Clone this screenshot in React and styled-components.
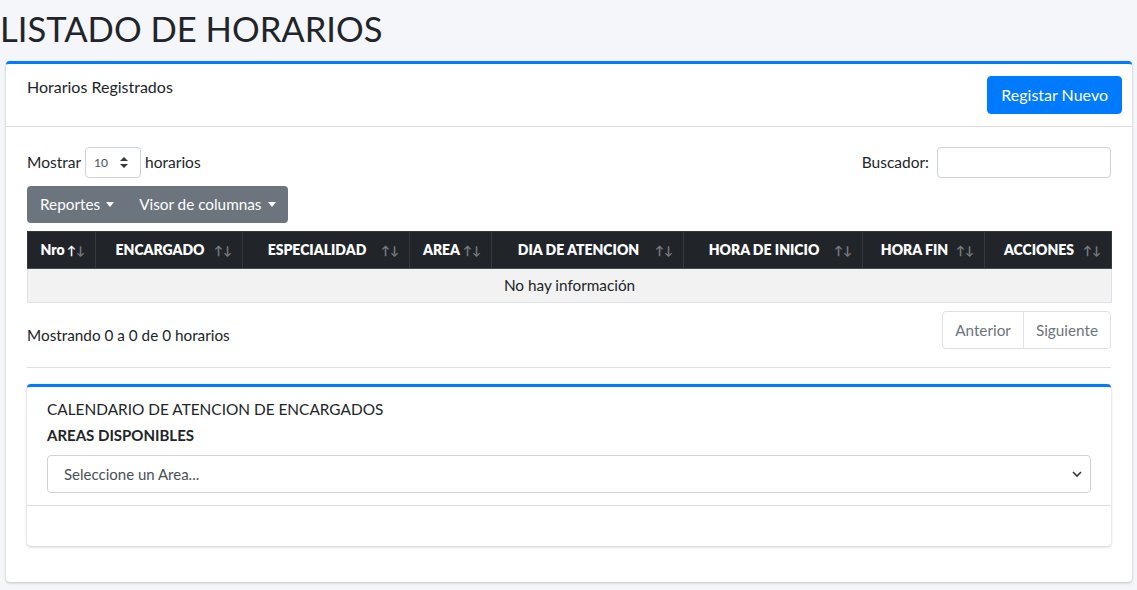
import React from 'react';
import styled, { createGlobalStyle } from 'styled-components';

const GlobalStyle = createGlobalStyle`
  body {
    margin: 0;
    background: #f4f6f9;
    font-family: Lato, "Noto Sans", sans-serif;
    font-size: 16px;
    color: #212529;
  }
`;

const Page = styled.div`
  display: flex;
  flex-direction: column;
`;

const Title = styled.h1`
  margin: 0;
  padding: 7px 0 10px;
  font-size: 34.6px;
  font-weight: 400;
  line-height: 44px;
  color: #212529;
`;

const Wrap = styled.div`
  padding: 0 5px 0 6px;
`;

const Card = styled.div`
  background: #fff;
  border-top: 3px solid #007bff;
  border-radius: 4px;
  box-shadow: 0 0 1px rgba(0, 0, 0, 0.125), 0 1px 3px rgba(0, 0, 0, 0.2);
  margin-bottom: ${(p) => p.mb || 8}px;
`;

const CardHeader = styled.div`
  display: flex;
  justify-content: space-between;
  align-items: flex-start;
  padding: 12px 10px 12px 21px;
  border-bottom: 1px solid rgba(0, 0, 0, 0.125);
`;

const CardTitle = styled.div`
  font-size: 16px;
  line-height: 22px;
`;

const Button = styled.button`
  font-family: inherit;
  font-size: 16px;
  line-height: 24px;
  padding: 6px 13px;
  color: #fff;
  background: ${(p) => p.bg || '#007bff'};
  border: 1px solid ${(p) => p.bg || '#007bff'};
  border-radius: 4px;
`;

const CardBody = styled.div`
  padding: 20px 21px 20px 21px;
`;

const Controls = styled.div`
  display: flex;
  flex-direction: column;
`;

const TopRow = styled.div`
  display: flex;
  justify-content: space-between;
  align-items: center;
  height: 30px;
`;

const Label = styled.label`
  display: flex;
  align-items: center;
  gap: 4px;
  font-size: 15.5px;
`;

const SmallSelect = styled.div`
  display: flex;
  align-items: center;
  justify-content: space-between;
  box-sizing: border-box;
  width: 56px;
  height: 31px;
  padding: 0 12px 0 8px;
  border: 1px solid #ced4da;
  border-radius: 4px;
  font-size: 12px;
  color: #495057;
`;

const SearchInput = styled.input`
  box-sizing: border-box;
  width: 174px;
  height: 31px;
  margin-left: 4px;
  border: 1px solid #ced4da;
  border-radius: 4px;
`;

const ButtonGroup = styled.div`
  display: inline-flex;
  margin: 9px 0 8px;
  background: #6c757d;
  border-radius: 4px;
  align-self: flex-start;
`;

const GroupButton = styled.button`
  display: flex;
  align-items: center;
  gap: 6px;
  font-family: inherit;
  font-size: 15.3px;
  line-height: 25px;
  padding: 6px 12px 6px 13px;
  color: #fff;
  background: transparent;
  border: none;
`;

const Caret = styled.span`
  width: 0;
  height: 0;
  border-top: 5px solid #fff;
  border-left: 4px solid transparent;
  border-right: 4px solid transparent;
`;

const Table = styled.table`
  width: 100%;
  border-collapse: collapse;
  table-layout: fixed;
`;

const Th = styled.th`
  position: relative;
  background: #212529;
  color: #fff;
  font-weight: 800;
  font-size: 14px;
  line-height: 24px;
  padding: 6px 30px 6px 12px;
  text-align: center;
  border: 1px solid #32383e;
  border-bottom: 1px solid #454d55;
  white-space: nowrap;
`;

const SortIcons = styled.span`
  position: absolute;
  top: 7px;
  right: 10px;
  display: flex;
  font-size: 12px;
  font-weight: 700;
`;

const Arrow = styled.span`
  color: ${(p) => (p.active ? '#fff' : '#7a7e82')};
`;

const Td = styled.td`
  background: #f2f2f2;
  text-align: center;
  padding: 5px 12px;
  line-height: 23px;
  font-size: 15.3px;
  border: 1px solid #dee2e6;
`;

const InfoRow = styled.div`
  display: flex;
  justify-content: space-between;
  align-items: flex-start;
  margin-top: 8px;
`;

const InfoText = styled.span`
  padding-top: 15px;
  font-size: 15.3px;
`;

const Pagination = styled.div`
  display: flex;
`;

const PageLink = styled.span`
  padding: 6px 12px;
  line-height: 24px;
  font-size: 15.3px;
  color: #6c757d;
  border: 1px solid #dee2e6;
  margin-left: -1px;
  border-radius: ${(p) => (p.first ? '4px 0 0 4px' : '0 4px 4px 0')};
`;

const Divider = styled.hr`
  margin: 18px 0 16px;
  border: 0;
  border-top: 1px solid #dee2e6;
`;

const InnerHeader = styled.div`
  padding: 10px 20px 12px;
  border-bottom: 1px solid rgba(0, 0, 0, 0.125);
`;

const InnerTitle = styled.div`
  font-size: 15.4px;
  font-weight: 400;
  line-height: 24px;
`;

const FieldLabel = styled.div`
  font-weight: 700;
  font-size: 15px;
  line-height: 24px;
  margin: 2px 0 8px;
`;

const BigSelect = styled.div`
  display: flex;
  align-items: center;
  justify-content: space-between;
  box-sizing: border-box;
  height: 38px;
  padding: 0 8px 0 16px;
  border: 1px solid #ced4da;
  border-radius: 4px;
  color: #495057;
  font-size: 15px;
`;

const InnerBody = styled.div`
  height: 40px;
`;

const columns = [
  ['Nro', 68],
  ['ENCARGADO', 147],
  ['ESPECIALIDAD', 167],
  ['AREA', 82],
  ['DIA DE ATENCION', 192],
  ['HORA DE INICIO', 179],
  ['HORA FIN', 122],
  ['ACCIONES', 127],
];

export default function App() {
  return (
    <Page>
      <GlobalStyle />
      <Title>LISTADO DE HORARIOS</Title>
      <Wrap>
        <Card>
          <CardHeader>
            <CardTitle>Horarios Registrados</CardTitle>
            <Button>Registar Nuevo</Button>
          </CardHeader>
          <CardBody>
            <Controls>
              <TopRow>
                <Label>
                  Mostrar
                  <SmallSelect>
                    10
                    <svg width="8" height="11" viewBox="0 0 8 11">
                      <path d="M4 0L8 4H0z M4 11L0 7h8z" fill="#343a40" />
                    </svg>
                  </SmallSelect>
                  horarios
                </Label>
                <Label>
                  Buscador:
                  <SearchInput />
                </Label>
              </TopRow>
              <ButtonGroup>
                <GroupButton>Reportes <Caret /></GroupButton>
                <GroupButton>Visor de columnas <Caret /></GroupButton>
              </ButtonGroup>
            </Controls>
            <Table>
              <colgroup>
                {columns.map(([name, w]) => (
                  <col key={name} style={{ width: w }} />
                ))}
              </colgroup>
              <thead>
                <tr>
                  {columns.map(([name], i) => (
                    <Th key={name}>
                      {name}
                      <SortIcons>
                        <Arrow active={i === 0}>↑</Arrow>
                        <Arrow>↓</Arrow>
                      </SortIcons>
                    </Th>
                  ))}
                </tr>
              </thead>
              <tbody>
                <tr>
                  <Td colSpan={8}>No hay información</Td>
                </tr>
              </tbody>
            </Table>
            <InfoRow>
              <InfoText>Mostrando 0 a 0 de 0 horarios</InfoText>
              <Pagination>
                <PageLink first>Anterior</PageLink>
                <PageLink>Siguiente</PageLink>
              </Pagination>
            </InfoRow>
            <Divider />
            <Card mb={16}>
              <InnerHeader>
                <InnerTitle>CALENDARIO DE ATENCION DE ENCARGADOS</InnerTitle>
                <FieldLabel>AREAS DISPONIBLES</FieldLabel>
                <BigSelect>
                  Seleccione un Area...
                  <svg width="10" height="8" viewBox="0 0 10 8">
                    <path d="M1 2l4 4 4-4" stroke="#343a40" strokeWidth="1.6" fill="none" />
                  </svg>
                </BigSelect>
              </InnerHeader>
              <InnerBody />
            </Card>
          </CardBody>
        </Card>
      </Wrap>
    </Page>
  );
}
